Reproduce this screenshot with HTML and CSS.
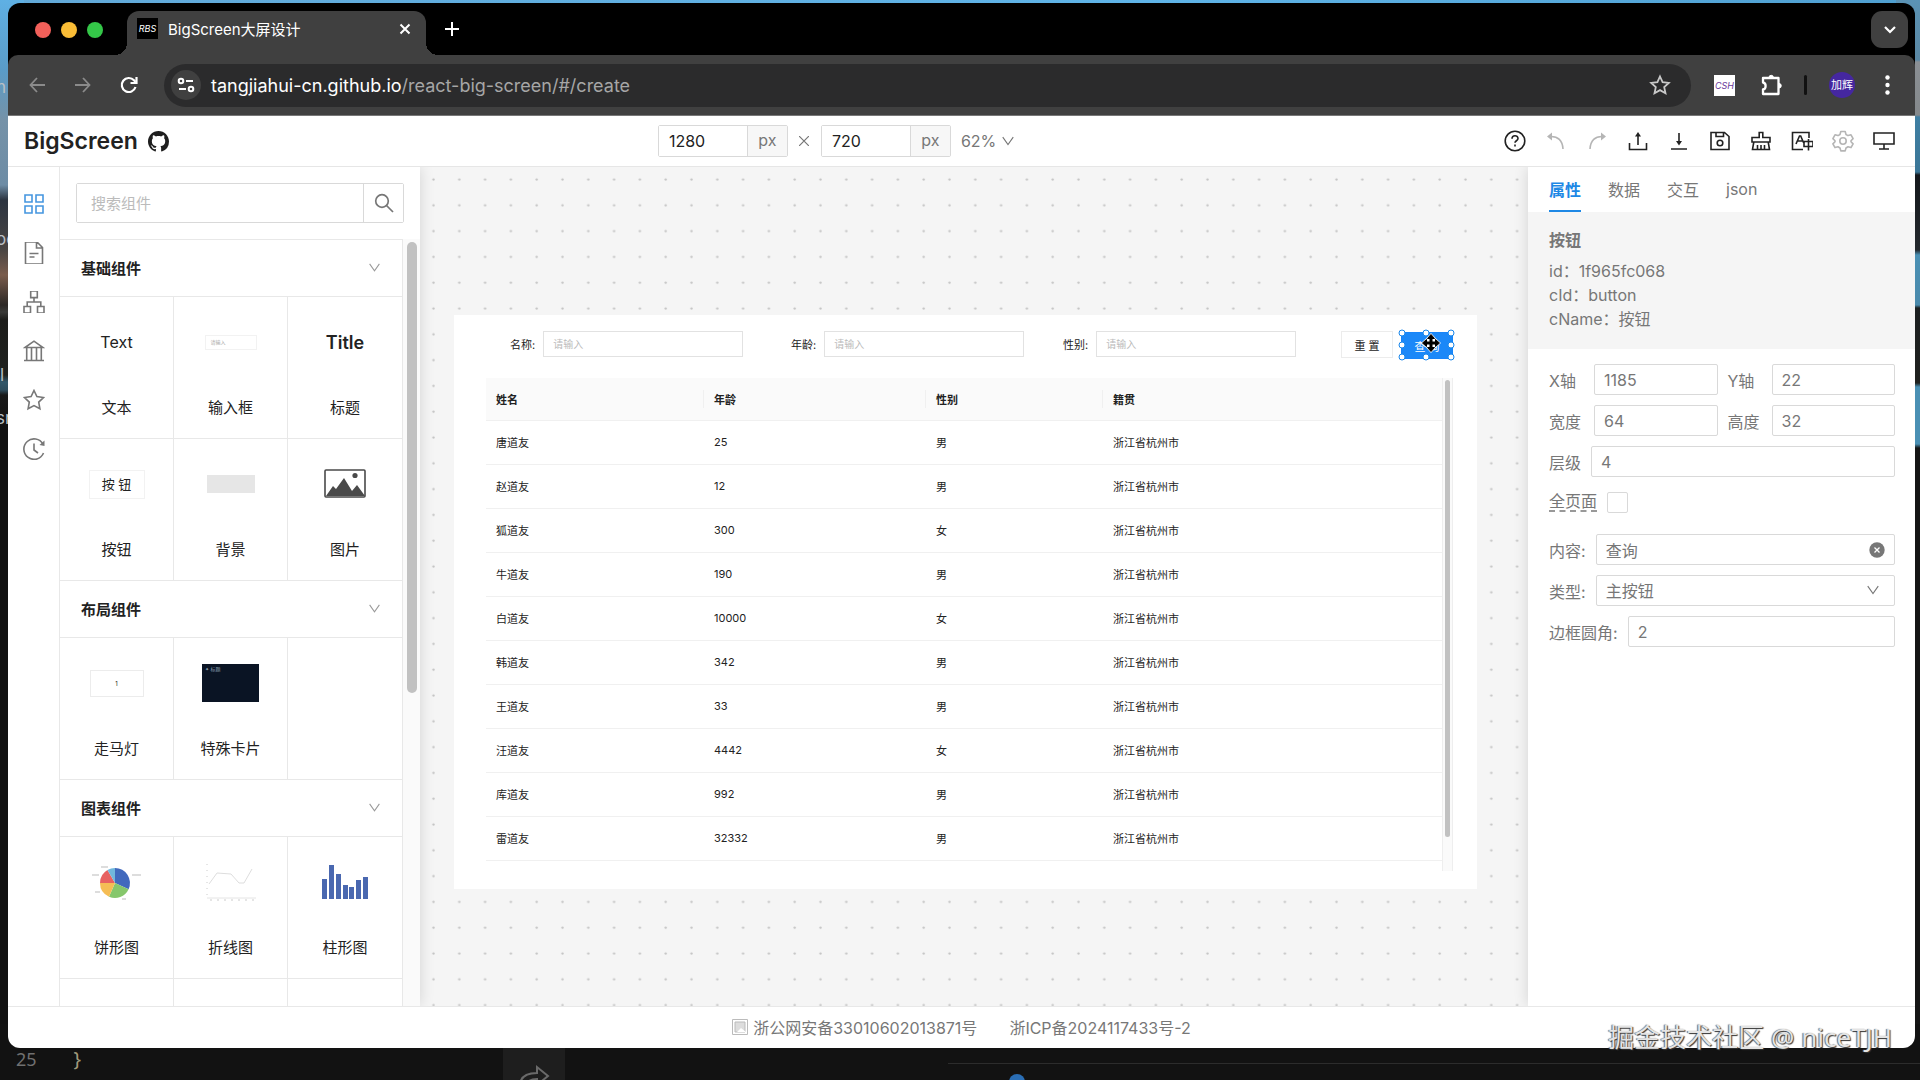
FILE: index.html
```html
<!DOCTYPE html>
<html lang="zh-CN">
  <head>
    <meta charset="UTF-8" />
    <title>BigScreen大屏设计</title>
    <link rel="stylesheet" href="styles.css" />
  </head>
  <body>
    <svg class="symbols" aria-hidden="true">
      <symbol id="down" viewBox="0 0 16 16"><path d="M2 3.5l6 8.5 6-8.5" fill="none" stroke="currentColor" stroke-width="1.3" /></symbol>
    </svg>

    <!-- desktop behind the window -->
    <div class="wallpaper-left" aria-hidden="true">
      <span class="peek peek-n">n</span>
      <span class="peek peek-oe">oe</span>
      <span class="peek peek-l">l</span>
      <span class="peek peek-sr">sr</span>
    </div>
    <div class="wallpaper-right"></div>
    <div class="editor-strip">
      <span class="line-no">25</span><span class="brace">}</span>
      <div class="share-box">
        <svg width="32" height="24" viewBox="0 0 32 24" fill="none" stroke="#6a6a6a" stroke-width="2"><path d="M2 23c0-9 6-13 17-13V4l11 9-11 9v-6c-7 0-10 2-11 7" /></svg>
      </div>
      <div class="editor-panel">
        <i class="blue-dot"></i>
      </div>
    </div>

    <div class="window">
      <div class="tab-strip">
        <div class="lights"><i class="red"></i><i class="yellow"></i><i class="green"></i></div>
        <div class="tab">
          <span class="favicon">RBS</span>
          <span class="tab-title">BigScreen大屏设计</span>
          <button class="plain" aria-label="close">
            <svg width="12" height="12" viewBox="0 0 12 12" stroke="#fff" stroke-width="2"><path d="M1.5 1.5l9 9M10.5 1.5l-9 9" /></svg>
          </button>
        </div>
        <button class="plain new-tab" aria-label="new tab">
          <svg width="14" height="14" viewBox="0 0 14 14" stroke="#fff" stroke-width="2"><path d="M7 0v14M0 7h14" /></svg>
        </button>
        <button class="plain tab-search" aria-label="search tabs">
          <svg width="12" height="8" viewBox="0 0 12 8" fill="none" stroke="#fff" stroke-width="2.2"><path d="M1 1l5 5 5-5" /></svg>
        </button>
      </div>

      <div class="toolbar">
        <button class="plain nav" aria-label="back">
          <svg width="16" height="16" viewBox="0 0 16 16" fill="none" stroke="#8b8b8b" stroke-width="1.8"><path d="M16 8H1.5M8 1L1.5 8 8 15" /></svg>
        </button>
        <button class="plain nav" aria-label="forward">
          <svg width="16" height="16" viewBox="0 0 16 16" fill="none" stroke="#8b8b8b" stroke-width="1.8"><path d="M0 8h14.5M8 1l6.5 7L8 15" /></svg>
        </button>
        <button class="plain nav" aria-label="reload">
          <svg width="18" height="18" viewBox="0 0 18 18" fill="none" stroke="#fff" stroke-width="2.2"><path d="M15.5 11A7 7 0 1 1 14 4.3L15.5 6" /><path d="M16.5 1v6h-6" /></svg>
        </button>
        <div class="omnibox">
          <span class="site-info">
            <svg width="18" height="16" viewBox="0 0 18 16" fill="none" stroke="#fff" stroke-width="2"><circle cx="4" cy="4" r="2.3" /><path d="M9 4h7M2 12h7" /><circle cx="14" cy="12" r="2.3" /></svg>
          </span>
          <span class="url">tangjiahui-cn.github.io<span class="path">/react-big-screen/#/create</span></span>
          <button class="plain" aria-label="bookmark">
            <svg width="22" height="22" viewBox="0 0 22 22" fill="none" stroke="#c8c8c8" stroke-width="1.8"><path d="M11 2.5l2.6 5.7 6.2.7-4.6 4.2 1.3 6.1L11 16.1l-5.5 3.1 1.300-6.1-4.6-4.2 6.2-.7z" /></svg>
          </button>
        </div>
        <span class="ext">CSH</span>
        <button class="plain puzzle" aria-label="extensions">
          <svg width="24" height="24" viewBox="0 0 24 24" fill="none" stroke="#fff" stroke-width="2.3" stroke-linejoin="round"><path d="M3 5h15.5v16H3v-4.5c3.5-.5 3.5-6.5 0-7z" /><path d="M9 4.5a2.2 2.2 0 0 1 4.4 0zM19 10.5a2 2 0 0 1 0 4.5z" fill="#fff" stroke-width="1" /></svg>
        </button>
        <i class="sep"></i>
        <span class="avatar">加辉</span>
        <button class="plain menu" aria-label="menu">
          <svg width="5" height="20" viewBox="0 0 5 20" fill="#fff"><circle cx="2.5" cy="2.5" r="2.2" /><circle cx="2.5" cy="10" r="2.2" /><circle cx="2.5" cy="17.5" r="2.2" /></svg>
        </button>
      </div>

      <header class="app-header">
        <div class="brand">
          <h1>BigScreen</h1>
          <a href="#" aria-label="GitHub"><svg width="21" height="21" viewBox="0 0 16 16" fill="#1f1f1f"><path d="M8 0C3.58 0 0 3.58 0 8c0 3.54 2.29 6.53 5.47 7.59.4.07.55-.17.55-.38 0-.19-.01-.82-.01-1.49-2.01.37-2.53-.49-2.69-.94-.09-.23-.48-.94-.82-1.13-.28-.15-.68-.52-.01-.53.63-.01 1.08.58 1.23.82.72 1.21 1.87.87 2.33.66.07-.52.28-.87.51-1.07-1.78-.2-3.64-.89-3.64-3.95 0-.87.31-1.59.82-2.15-.08-.2-.36-1.02.08-2.12 0 0 .67-.21 2.2.82.64-.18 1.32-.27 2-.27s1.36.09 2 .27c1.53-1.04 2.2-.82 2.2-.82.44 1.1.16 1.92.08 2.12.51.56.82 1.27.82 2.15 0 3.07-1.87 3.75-3.65 3.95.29.25.54.73.54 1.48 0 1.07-.01 1.93-.01 2.2 0 .21.15.46.55.38A8.01 8.01 0 0016 8c0-4.42-3.58-8-8-8z" /></svg></a>
        </div>
        <div class="size">
          <label class="unit-input"><input type="text" value="1280" aria-label="width" /><span>px</span></label>
          <svg class="times" width="10" height="10" viewBox="0 0 10 10" stroke="#777" stroke-width="1.2"><path d="M0 0l10 10M10 0L0 10" /></svg>
          <label class="unit-input"><input type="text" value="720" aria-label="height" /><span>px</span></label>
          <div class="zoom">
            <select aria-label="zoom"><option>62%</option></select>
            <svg width="14" height="14"><use href="#down" /></svg>
          </div>
        </div>
        <div class="actions">
          <button class="plain" aria-label="help"><svg viewBox="0 0 22 22"><circle cx="11" cy="11" r="9.8" /><path d="M8 8.8c0-4 6-4 6-.3 0 2.3-3 2.2-3 4.3M11 14.6v1.8" /></svg></button>
          <button class="plain off" aria-label="undo"><svg viewBox="0 0 22 22"><path d="M5 6.5c8-.5 12.5 4 13 12.5" /><path d="M7 2.5v8L2 6.500z" fill="#b5b5b5" stroke="none" /></svg></button>
          <button class="plain off" aria-label="redo"><svg viewBox="0 0 22 22"><path d="M17 6.5C9 6 4.5 10.5 4 19" /><path d="M15 2.5v8l5-4z" fill="#b5b5b5" stroke="none" /></svg></button>
          <button class="plain" aria-label="export"><svg viewBox="0 0 22 22"><path d="M2.5 13v6.500h17V13M11 15V5" /><path d="M11 2l3 4.500H8z" fill="#222" stroke="none" /></svg></button>
          <button class="plain" aria-label="import"><svg viewBox="0 0 22 22"><path d="M3 19h16M11 3v9" /><path d="M11 15.5l-3-4.500h6z" fill="#222" stroke="none" /></svg></button>
          <button class="plain" aria-label="save"><svg viewBox="0 0 22 22"><path d="M2 2.5h13.500l4.500 4v13H2zM7 2.500v4h7.500v-4" /><circle cx="11" cy="13" r="2.8" /></svg></button>
          <button class="plain" aria-label="clear"><svg viewBox="0 0 22 22"><path d="M9.2 2.5h3.600v5H20v4.500H2V7.500h7.200zM3.800 12L2.500 19.500h17L18.200 12M7.500 19v-4M11 19v-4M14.500 19v-4" /></svg></button>
          <button class="plain" aria-label="language"><svg viewBox="0 0 22 22"><path d="M18 8V2.500H1.500v17H12M5 14L8.500 6h1.200l3 7M6.500 11h5" /><path d="M13 11.500h9v5h-9zM17.500 9v11.500" /></svg></button>
          <button class="plain off" aria-label="settings"><svg viewBox="0 0 22 22"><circle cx="11" cy="11" r="3.2" /><path d="M8.800 1.500h4.400l.8 3 2 1.100 3-.8 2.100 3.800-2.100 2.100v1l2.100 2.200-2.100 3.700-3-.8-2 1.200-.8 2.900H8.800L8 18l-2-1.200-3 .8-2.100-3.700L3 11.700v-1L.9 8.600 3 4.800l3 .8 2-1.100z" stroke-linejoin="round" /></svg></button>
          <button class="plain" aria-label="preview"><svg viewBox="0 0 22 22"><path d="M1 3h20v11H1zM11 14v5M6 19h10" /></svg></button>
        </div>
      </header>

      <main class="workbench">
        <nav class="rail">
          <button class="plain active" aria-label="components"><svg viewBox="0 0 22 22"><path d="M2 2h7v7H2zM13 2h7v7h-7zM2 13h7v7H2zM13 13h7v7h-7z" /></svg></button>
          <button class="plain" aria-label="pages"><svg viewBox="0 0 22 22"><path d="M2.500 0h11.500l5.500 5.500V22h-17zM13.500 0v6h6M6.500 11.500h9M6.500 15h5" /></svg></button>
          <button class="plain" aria-label="structure"><svg viewBox="0 0 22 22"><path d="M7.700 0h6.600v6.600H7.700zM1 15.500h6.500V22H1zM14.500 15.500H21V22h-6.500zM11 6.600V11M4.200 15.500V11h13.600v4.500" /></svg></button>
          <button class="plain" aria-label="assets"><svg viewBox="0 0 22 22"><path d="M1 20.500h20M2 7.500L11 1.200l9 6.300zM3.700 7.500v13M8.500 7.500v13M13.500 7.500v13M18.300 7.500v13" /></svg></button>
          <button class="plain" aria-label="favorites"><svg viewBox="0 0 22 22"><path d="M11 1.500l2.900 6.100 6.600.9-4.800 4.600 1.200 6.700-5.900-3.200-5.900 3.200 1.200-6.700L1.500 8.500l6.600-.9z" /></svg></button>
          <button class="plain" aria-label="history"><svg viewBox="0 0 22 22"><path d="M20.500 15A10.200 10.200 0 1 1 20 6.200M11 5.500v6.500l4 3" /><path d="M21.500 2.500v5.500l-5-1z" fill="#777" stroke="none" /></svg></button>
        </nav>

        <aside class="library">
          <div class="search">
            <input type="text" placeholder="搜索组件" aria-label="搜索组件" />
            <button aria-label="search"><svg width="20" height="20" viewBox="0 0 20 20" fill="none" stroke="#777" stroke-width="1.7"><circle cx="8" cy="8" r="6.3" /><path d="M12.500 12.500L19 19" /></svg></button>
          </div>
          <div class="library-body">
            <div class="groups">
              <button class="group-title">基础组件<svg width="13" height="13"><use href="#down" /></svg></button>
              <div class="cells">
                <div class="cell"><div class="thumb text-demo">Text</div>文本</div>
                <div class="cell"><div class="thumb"><i class="input-demo">请输入</i></div>输入框</div>
                <div class="cell"><div class="thumb title-demo">Title</div>标题</div>
                <div class="cell"><div class="thumb"><i class="button-demo">按 钮</i></div>按钮</div>
                <div class="cell"><div class="thumb"><i class="bg-demo"></i></div>背景</div>
                <div class="cell"><div class="thumb">
                  <svg width="42" height="30" viewBox="0 0 42 30"><rect x="1" y="1" width="40" height="27" rx="1" fill="#fff" stroke="#4a4a4a" stroke-width="1.6" /><path d="M2 27l7-10 3 3 8-11 8 13 5-6 8 11z" fill="#4a4a4a" /><circle cx="31" cy="6.5" r="2.6" fill="#4a4a4a" /></svg>
                </div>图片</div>
              </div>
              <button class="group-title">布局组件<svg width="13" height="13"><use href="#down" /></svg></button>
              <div class="cells">
                <div class="cell"><div class="thumb"><i class="carousel-demo">1</i></div>走马灯</div>
                <div class="cell"><div class="thumb"><i class="card-demo">✦ 标题</i></div>特殊卡片</div>
                <div class="cell"></div>
              </div>
              <button class="group-title">图表组件<svg width="13" height="13"><use href="#down" /></svg></button>
              <div class="cells">
                <div class="cell"><div class="thumb">
                  <svg width="52" height="38" viewBox="0 0 52 38">
                    <path d="M24 20V5a15 15 0 0 1 13.6 21.3z" fill="#4169bd" />
                    <path d="M24 20l13.6 6.3A15 15 0 0 1 18 33.7z" fill="#86c76c" />
                    <path d="M24 20l-6 13.7A15 15 0 0 1 9 20z" fill="#f5bd55" />
                    <path d="M24 20H9a15 15 0 0 1 7.5-13z" fill="#e76262" />
                    <path d="M24 20L16.5 7A15 15 0 0 1 24 5z" fill="#70b7dc" />
                    <path d="M10 4h7M1 12h7M41 12h9M4 29h5M31 36h4" stroke="#bbb" />
                  </svg>
                </div>饼形图</div>
                <div class="cell"><div class="thumb">
                  <svg width="52" height="38" viewBox="0 0 52 38" fill="none"><path d="M4 21l8-11 14 1 8 9h5l8-14" stroke="#d4d4d4" stroke-width=".8" /><path d="M2 35h49" stroke="#e4e4e4" /><path d="M2 1v32" stroke="#ccc" stroke-dasharray="1 5" /><path d="M5 37h44" stroke="#ccc" stroke-dasharray="2 5" /></svg>
                </div>折线图</div>
                <div class="cell"><div class="thumb">
                  <svg width="48" height="38" viewBox="0 0 48 38" fill="#4a68b0"><path d="M1 16h5v20H1zM8 2h5v34H8zM15 11h5v25h-5zM22 22h5v14h-5zM28 24h5v12h-5zM35 17h5v19h-5zM42 14h5v22h-5z" /></svg>
                </div>柱形图</div>
                <div class="cell"></div>
                <div class="cell"></div>
                <div class="cell"></div>
              </div>
            </div>
            <div class="track"><i></i></div>
          </div>
        </aside>

        <section class="canvas">
          <svg class="dots" width="100%" height="100%" aria-hidden="true">
            <pattern id="dot" width="25.8" height="25.8" patternUnits="userSpaceOnUse"><circle cx="13.5" cy="12.5" r="1.2" fill="#c4c4c4" /></pattern>
            <rect width="100%" height="100%" fill="url(#dot)" />
          </svg>
          <div class="artboard">
            <label class="field name-field">名称: <input type="text" placeholder="请输入" /></label>
            <label class="field age-field">年龄: <input type="text" placeholder="请输入" /></label>
            <label class="field sex-field">性别: <input type="text" placeholder="请输入" /></label>
            <button class="btn reset">重 置</button>
            <div class="selected">
              <button class="btn primary">查 询</button>
              <svg class="handles" width="60" height="34" viewBox="0 0 60 34" fill="#fff" stroke="#1785ea">
                <circle cx="5" cy="4" r="3" /><circle cx="29" cy="4" r="3" /><circle cx="54" cy="4" r="3" />
                <circle cx="5" cy="16" r="3" /><circle cx="54" cy="16" r="3" />
                <circle cx="5" cy="28" r="3" /><circle cx="29" cy="28" r="3" /><circle cx="54" cy="28" r="3" />
              </svg>
              <svg class="cursor" width="20" height="20" viewBox="0 0 20 20"><path d="M10 0l4.500 5v.5H15L20 10l-5 4.500h-.5v.5L10 20l-4.500-5v-.5H5L0 10l5-4.500h.5V5z" fill="#fff" /><path d="M10 1.500l3.500 4H11V9h3.500V6.500l4 3.500-4 3.500V11H11v3.500h2.500l-3.500 4-3.500-4H9V11H5.500v2.500l-4-3.500 4-3.500V9H9V5.500H6.500z" fill="#000" stroke="#000" /></svg>
            </div>
            <div class="table-box">
              <table>
                <thead>
                  <tr><th class="c1">姓名</th><th class="c2">年龄</th><th class="c3">性别</th><th>籍贯</th></tr>
                </thead>
                <tbody>
                  <tr><td>唐道友</td><td>25</td><td>男</td><td>浙江省杭州市</td></tr>
                  <tr><td>赵道友</td><td>12</td><td>男</td><td>浙江省杭州市</td></tr>
                  <tr><td>狐道友</td><td>300</td><td>女</td><td>浙江省杭州市</td></tr>
                  <tr><td>牛道友</td><td>190</td><td>男</td><td>浙江省杭州市</td></tr>
                  <tr><td>白道友</td><td>10000</td><td>女</td><td>浙江省杭州市</td></tr>
                  <tr><td>韩道友</td><td>342</td><td>男</td><td>浙江省杭州市</td></tr>
                  <tr><td>王道友</td><td>33</td><td>男</td><td>浙江省杭州市</td></tr>
                  <tr><td>汪道友</td><td>4442</td><td>女</td><td>浙江省杭州市</td></tr>
                  <tr><td>库道友</td><td>992</td><td>男</td><td>浙江省杭州市</td></tr>
                  <tr><td>雷道友</td><td>32332</td><td>男</td><td>浙江省杭州市</td></tr>
                </tbody>
              </table>
              <div class="table-track"><i></i></div>
            </div>
          </div>
        </section>

        <aside class="inspector">
          <div class="tabs">
            <button class="plain current">属性</button>
            <button class="plain">数据</button>
            <button class="plain">交互</button>
            <button class="plain">json</button>
          </div>
          <div class="info">
            <h2>按钮</h2>
            <p>id：1f965fc068</p>
            <p>cId：button</p>
            <p>cName：按钮</p>
          </div>
          <form class="props">
            <div class="row pair">
              <label for="x">X轴</label><input id="x" type="text" value="1185" />
              <label for="y">Y轴</label><input id="y" type="text" value="22" />
            </div>
            <div class="row pair">
              <label for="w">宽度</label><input id="w" type="text" value="64" />
              <label for="h">高度</label><input id="h" type="text" value="32" />
            </div>
            <div class="row"><label for="z">层级</label><input id="z" type="text" value="4" /></div>
            <div class="row full"><label for="full">全页面</label><input id="full" type="checkbox" /></div>
            <div class="row">
              <label for="content">内容:</label>
              <div class="control">
                <input id="content" type="text" value="查询" />
                <svg class="clear" width="16" height="16" viewBox="0 0 16 16"><circle cx="8" cy="8" r="7.7" fill="#777" /><path d="M5.500 5.500l5 5M10.500 5.500l-5 5" stroke="#fff" stroke-width="1.3" /></svg>
              </div>
            </div>
            <div class="row">
              <label for="type">类型:</label>
              <div class="control">
                <select id="type"><option>主按钮</option></select>
                <svg class="arrow" width="14" height="14"><use href="#down" /></svg>
              </div>
            </div>
            <div class="row"><label for="radius">边框圆角:</label><input id="radius" type="text" value="2" /></div>
          </form>
        </aside>
      </main>

      <footer class="app-footer">
        <a href="#"><svg width="16" height="16" viewBox="0 0 16 16" fill="none" stroke="#bbb"><path d="M.5.5h15v15H.5z" /><path d="M3 3h10v10H3z" fill="#ddd" /><path d="M5 13l4-4 5 4z" fill="#fff" stroke="none" /></svg>浙公网安备33010602013871号</a>
        <a href="#">浙ICP备2024117433号-2</a>
      </footer>
    </div>
    <div class="watermark">掘金技术社区 @ niceTJH</div>
  </body>
</html>
```
FILE: styles.css
```css
* {
  box-sizing: border-box;
}
body {
  margin: 0;
  height: 100vh;
  padding: 3px 5px 32px 8px;
  position: relative;
  overflow: hidden;
  background: linear-gradient(90deg, #62a9d8, #5fb4e8 60%, #4f9fd0);
  font-family: Inter, "Noto Sans CJK SC", sans-serif;
  font-size: 15px;
  color: #222;
}
h1,
h2,
p {
  margin: 0;
}
input,
select,
button {
  font: inherit;
  color: inherit;
  margin: 0;
}
a {
  color: inherit;
  text-decoration: none;
}
.symbols {
  position: absolute;
  width: 0;
  height: 0;
}
.plain {
  display: flex;
  align-items: center;
  justify-content: center;
  padding: 0;
  border: 0;
  background: none;
}

/* desktop */
.wallpaper-left {
  position: absolute;
  left: 0;
  top: 0;
  bottom: 0;
  width: 24px;
  background: linear-gradient(#5fb0e4 0, #5a9cc8 70px, #7592a8 120px, #6d8ca5 185px, #2c3440 200px, #4a4543 250px, #7a5c4c 275px, #2c2825 305px, #3a3a38 312px, #1c1c1a 320px, #20221f 375px, #31576a 382px, #2e4c5c 390px, #191919 395px, #111 430px);
}
.peek {
  position: absolute;
  left: -4px;
  font-size: 17px;
  line-height: 20px;
  color: #b9bfc4;
}
.peek-n {
  top: 77px;
}
.peek-oe {
  top: 229px;
}
.peek-l {
  top: 365px;
  left: 0;
}
.peek-sr {
  top: 408px;
}
.wallpaper-right {
  position: absolute;
  right: 0;
  top: 0;
  bottom: 0;
  width: 24px;
  background: linear-gradient(#5b93b5 0, #5a87a3 60px, #8a8f94 62px, #85898c 115px, #3f7fa3 117px, #3b7697 172px, #14181c 175px, #23282c 250px, #4a90b4 255px, #4a8aac 305px, #1b1f20 308px, #20211f 383px, #4a90b4 387px, #4a90b4 444px, #151515 448px);
}
.editor-strip {
  position: absolute;
  left: 0;
  right: 0;
  bottom: 0;
  height: 56px;
  padding: 24px 0 0 16px;
  display: flex;
  background: #121212;
  font-family: "Noto Sans", sans-serif;
  font-size: 18px;
  line-height: 22px;
  color: #707070;
}
.brace {
  margin-left: 37px;
  font-size: 20px;
  color: #a09a7c;
}
.share-box {
  margin-left: 422px;
  width: 62px;
  padding: 15px 0 0 15px;
  background: #1e1e1e;
}
.editor-panel {
  margin: 15px 0 0 383px;
  flex: 1;
  border-top: 1px solid #2c2c2c;
  padding: 10px 0 0 61px;
}
.blue-dot {
  display: block;
  width: 16px;
  height: 16px;
  border-radius: 50%;
  background: #2a6eb5;
}

/* browser window */
.window {
  position: relative;
  height: 100%;
  display: flex;
  flex-direction: column;
  border-radius: 12px;
  overflow: hidden;
  background: #000;
}
.tab-strip {
  height: 52px;
  padding: 8px 7px 0 27px;
  display: flex;
}
.lights {
  display: flex;
  gap: 10px;
  padding-top: 11px;
}
.lights i {
  width: 16px;
  height: 16px;
  border-radius: 50%;
}
.red {
  background: #f2605a;
}
.yellow {
  background: #fabd36;
}
.green {
  background: #34c748;
}
.tab {
  position: relative;
  margin-left: 24px;
  width: 299px;
  padding: 0 15px 9px 10px;
  display: flex;
  align-items: center;
  border-radius: 12px 12px 0 0;
  background: #404040;
  color: #fff;
}
.tab::before,
.tab::after {
  content: "";
  position: absolute;
  bottom: 0;
  width: 12px;
  height: 12px;
}
.tab::before {
  left: -12px;
  background: radial-gradient(circle at 0 0, #000 12px, #404040 12px);
}
.tab::after {
  right: -12px;
  background: radial-gradient(circle at 100% 0, #000 12px, #404040 12px);
}
.favicon {
  width: 21px;
  height: 21px;
  background: #000;
  font-size: 9px;
  font-style: italic;
  line-height: 21px;
  text-align: center;
}
.tab-title {
  flex: 1;
  margin-left: 10px;
}
.new-tab {
  width: 52px;
  height: 36px;
}
.tab-search {
  margin-left: auto;
  width: 37px;
  height: 37px;
  border-radius: 11px;
  background: #404040;
}
.toolbar {
  height: 61px;
  padding-left: 6px;
  display: flex;
  align-items: center;
  border-radius: 10px 10px 0 0;
  border-bottom: 1px solid #777;
  background: #404040;
}
.nav {
  width: 46px;
  height: 40px;
}
.omnibox {
  flex: 1;
  height: 43px;
  margin-left: 12px;
  padding: 0 20px 0 7px;
  display: flex;
  align-items: center;
  border-radius: 22px;
  background: #2b2b2c;
  color: #fff;
}
.site-info {
  width: 30px;
  height: 30px;
  margin-right: 10px;
  display: flex;
  align-items: center;
  justify-content: center;
  border-radius: 50%;
  background: #404040;
}
.url {
  flex: 1;
  font-size: 18px;
}
.path {
  color: #a6a6a6;
}
.ext {
  width: 21px;
  height: 21px;
  margin-left: 23px;
  background: #fff;
  font-size: 9px;
  font-style: italic;
  line-height: 21px;
  text-align: center;
  color: #6a3a9a;
}
.puzzle {
  margin-left: 25px;
}
.sep {
  width: 3px;
  height: 20px;
  margin-left: 20px;
  border-radius: 2px;
  background: #111;
}
.avatar {
  width: 26px;
  height: 26px;
  margin-left: 22px;
  border-radius: 50%;
  background: #4527a0;
  font-size: 11px;
  line-height: 26px;
  text-align: center;
  color: #fff;
}
.menu {
  width: 24px;
  margin: 0 16px 0 20px;
}

/* app header */
.app-header {
  height: 51px;
  padding: 0 20px 0 16px;
  display: flex;
  align-items: center;
  justify-content: space-between;
  border-bottom: 1px solid #e6e6e6;
  background: #fff;
}
.brand {
  display: flex;
  align-items: center;
  gap: 10px;
}
.brand h1 {
  font-size: 23px;
  font-weight: 600;
}
.brand a {
  display: flex;
}
.size {
  display: flex;
  align-items: center;
  font-size: 16px;
}
.unit-input {
  width: 130px;
  height: 32px;
  display: flex;
  border: 1px solid #d9d9d9;
  border-radius: 2px;
}
.unit-input input {
  flex: 1;
  min-width: 0;
  padding: 0 10px;
  border: 0;
}
.unit-input span {
  width: 40px;
  border-left: 1px solid #d9d9d9;
  background: #f7f7f7;
  line-height: 28px;
  text-align: center;
  color: #777;
}
.times {
  margin: 0 12px 0 11px;
}
.zoom {
  position: relative;
  width: 54px;
  margin-left: 10px;
  color: #777;
}
.zoom select {
  width: 100%;
  padding: 0;
  border: 0;
  background: none;
  appearance: none;
}
.zoom svg {
  position: absolute;
  right: 0;
  top: 3px;
  pointer-events: none;
}
.actions {
  display: flex;
  gap: 19px;
}
.actions svg,
.rail svg {
  width: 22px;
  height: 22px;
  fill: none;
  stroke: #222;
  stroke-width: 1.6;
}
.actions .off svg {
  stroke: #b5b5b5;
}

/* left side */
.workbench {
  flex: 1;
  min-height: 0;
  display: flex;
  background: #fff;
}
.rail {
  width: 52px;
  padding-top: 26px;
  display: flex;
  flex-direction: column;
  align-items: center;
  gap: 27px;
  border-right: 1px solid #e8e8e8;
}
.rail svg {
  stroke: #777;
}
.rail .active svg {
  stroke: #4596e0;
}
.library,
.inspector {
  position: relative;
  z-index: 1;
  display: flex;
  flex-direction: column;
  background: #fff;
  box-shadow: 0 0 14px rgba(0, 0, 0, 0.14);
}
.library {
  width: 360px;
  clip-path: inset(0 -20px 0 0);
}
.search {
  height: 40px;
  margin: 16px;
  display: flex;
  border: 1px solid #d9d9d9;
  border-radius: 2px;
}
.search input {
  flex: 1;
  min-width: 0;
  padding: 0 14px;
  border: 0;
}
::placeholder {
  color: #bbb;
}
.search button {
  width: 40px;
  display: flex;
  align-items: center;
  justify-content: center;
  padding: 0;
  border: 0;
  border-left: 1px solid #d9d9d9;
  background: #fff;
}
.library-body {
  flex: 1;
  min-height: 0;
  display: flex;
  overflow: hidden;
}
.groups {
  flex: 1;
  border: 1px solid #e8e8e8;
  border-width: 1px 1px 0 0;
}
.group-title {
  width: 100%;
  height: 57px;
  padding: 0 21px 2px;
  display: flex;
  align-items: center;
  justify-content: space-between;
  border: 0;
  border-bottom: 1px solid #e8e8e8;
  background: #fff;
  font-weight: 600;
}
.group-title svg {
  color: #999;
}
.cells {
  display: grid;
  grid-template-columns: repeat(3, 1fr);
}
.cell {
  height: 142px;
  padding-top: 20px;
  border-right: 1px solid #e8e8e8;
  border-bottom: 1px solid #e8e8e8;
  text-align: center;
}
.cell:nth-child(3n) {
  border-right: 0;
}
.thumb {
  height: 50px;
  margin-bottom: 29px;
  display: flex;
  align-items: center;
  justify-content: center;
}
.thumb i {
  font-style: normal;
}
.text-demo {
  font-size: 16px;
}
.title-demo {
  font-size: 18px;
  font-weight: 600;
}
.input-demo {
  width: 52px;
  height: 15px;
  padding-left: 5px;
  border: 1px solid #f2f2f2;
  font-size: 5px;
  line-height: 13px;
  text-align: left;
  color: #aaa;
}
.button-demo {
  width: 56px;
  height: 29px;
  border: 1px solid #f2f2f2;
  font-size: 13px;
  line-height: 27px;
}
.bg-demo {
  width: 48px;
  height: 18px;
  background: #e6e6e6;
}
.carousel-demo {
  width: 54px;
  height: 27px;
  border: 1px solid #ececec;
  font-size: 6px;
  line-height: 26px;
}
.card-demo {
  width: 57px;
  height: 38px;
  padding-left: 3px;
  background: #0a1424;
  font-size: 5px;
  line-height: 10px;
  text-align: left;
  color: #8ea0b0;
}
.track {
  width: 17px;
  padding: 3px 3px 0 4px;
  background: #fafafa;
}
.track i {
  display: block;
  height: 451px;
  border-radius: 5px;
  background: #c1c1c1;
}

/* canvas */
.canvas {
  position: relative;
  flex: 1;
  overflow: hidden;
  background: #f5f5f5;
}
.dots {
  display: block;
}
.artboard {
  position: absolute;
  left: 34px;
  top: 148px;
  width: 1023px;
  height: 574px;
  background: #fff;
  font-size: 11px;
}
.field {
  position: absolute;
  top: 16px;
  display: flex;
  align-items: center;
  gap: 8px;
}
.name-field {
  left: 56px;
}
.age-field {
  left: 337px;
}
.sex-field {
  left: 609px;
}
.field input {
  width: 200px;
  height: 26px;
  padding: 0 9px;
  border: 1px solid #e2e2e2;
  font-size: 10px;
}
.btn {
  width: 52px;
  height: 27px;
  padding: 0;
  border: 1px solid #ececec;
  background: #fff;
}
.reset {
  position: absolute;
  left: 887px;
  top: 16px;
}
.selected {
  position: absolute;
  left: 947px;
  top: 17px;
}
.primary {
  display: block;
  border-color: #1785fa;
  background: #1b88f8;
  color: #fff;
}
.handles {
  position: absolute;
  left: -4px;
  top: -3px;
}
.cursor {
  position: absolute;
  left: 20px;
  top: 1px;
}
.table-box {
  position: absolute;
  left: 32px;
  top: 63px;
  width: 967px;
  height: 493px;
  display: flex;
}
table {
  flex: 1;
  height: 0;
  border-collapse: collapse;
  table-layout: fixed;
}
th,
td {
  height: 44px;
  padding: 0 10px;
  border-bottom: 1px solid #f0f0f0;
  text-align: left;
}
th {
  height: 42px;
  background: linear-gradient(#f0f0f0, #f0f0f0) right center / 1px 18px no-repeat #fafafa;
  font-weight: 600;
}
th:last-child {
  background: #fafafa;
}
.c1 {
  width: 218px;
}
.c2 {
  width: 222px;
}
.c3 {
  width: 177px;
}
.table-track {
  width: 11px;
  padding: 2px 2px 0;
  border: 1px solid #eee;
  border-width: 0 1px;
  background: #fafafa;
}
.table-track i {
  display: block;
  height: 457px;
  border-radius: 4px;
  background: #c1c1c1;
}

/* right side */
.inspector {
  width: 387px;
  clip-path: inset(0 0 0 -20px);
  font-size: 16px;
  color: #777;
}
.tabs {
  height: 45px;
  padding-left: 21px;
  display: flex;
  gap: 27px;
}
.tabs button {
  border-bottom: 2px solid transparent;
}
.tabs .current {
  border-color: #1e88e5;
  font-weight: 600;
  color: #1e88e5;
}
.info {
  height: 137px;
  padding: 16px 21px;
  background: #f5f5f5;
  line-height: 24px;
}
.info h2 {
  margin-bottom: 7px;
  font-size: 16px;
  font-weight: 600;
}
.props {
  padding: 15px 20px 0 21px;
  display: flex;
  flex-direction: column;
  gap: 10px;
}
.row {
  height: 31px;
  display: flex;
  align-items: center;
  gap: 10px;
}
.pair {
  display: grid;
  grid-template-columns: 35px 1fr 34px 1fr;
}
.full {
  margin-bottom: 6px;
}
.full label {
  border-bottom: 2px dashed #999;
  line-height: 17px;
}
.props input[type="text"],
.props select {
  flex: 1;
  width: 100%;
  min-width: 0;
  height: 31px;
  padding: 0 9px;
  border: 1px solid #d9d9d9;
  border-radius: 2px;
  background: #fff;
  appearance: none;
}
.props input[type="checkbox"] {
  width: 21px;
  height: 21px;
  border: 1px solid #d9d9d9;
  border-radius: 2px;
  appearance: none;
}
.control {
  position: relative;
  flex: 1;
  display: flex;
}
.clear {
  position: absolute;
  right: 10px;
  top: 8px;
}
.arrow {
  position: absolute;
  right: 15px;
  top: 8px;
  pointer-events: none;
}

.app-footer {
  height: 42px;
  padding-bottom: 2px;
  display: flex;
  align-items: center;
  justify-content: center;
  gap: 32px;
  border-top: 1px solid #e8e8e8;
  background: #fff;
  font-size: 16px;
  color: #777;
}
.app-footer a {
  display: flex;
  align-items: center;
  gap: 5px;
}
.watermark {
  position: absolute;
  right: 28px;
  bottom: 26px;
  font-family: "Noto Sans", "Noto Sans CJK SC", sans-serif;
  font-size: 26px;
  line-height: 34px;
  color: #e4e4e4;
  text-shadow: 1px 1px 1px #333, -1px 0 1px #666;
}
```
